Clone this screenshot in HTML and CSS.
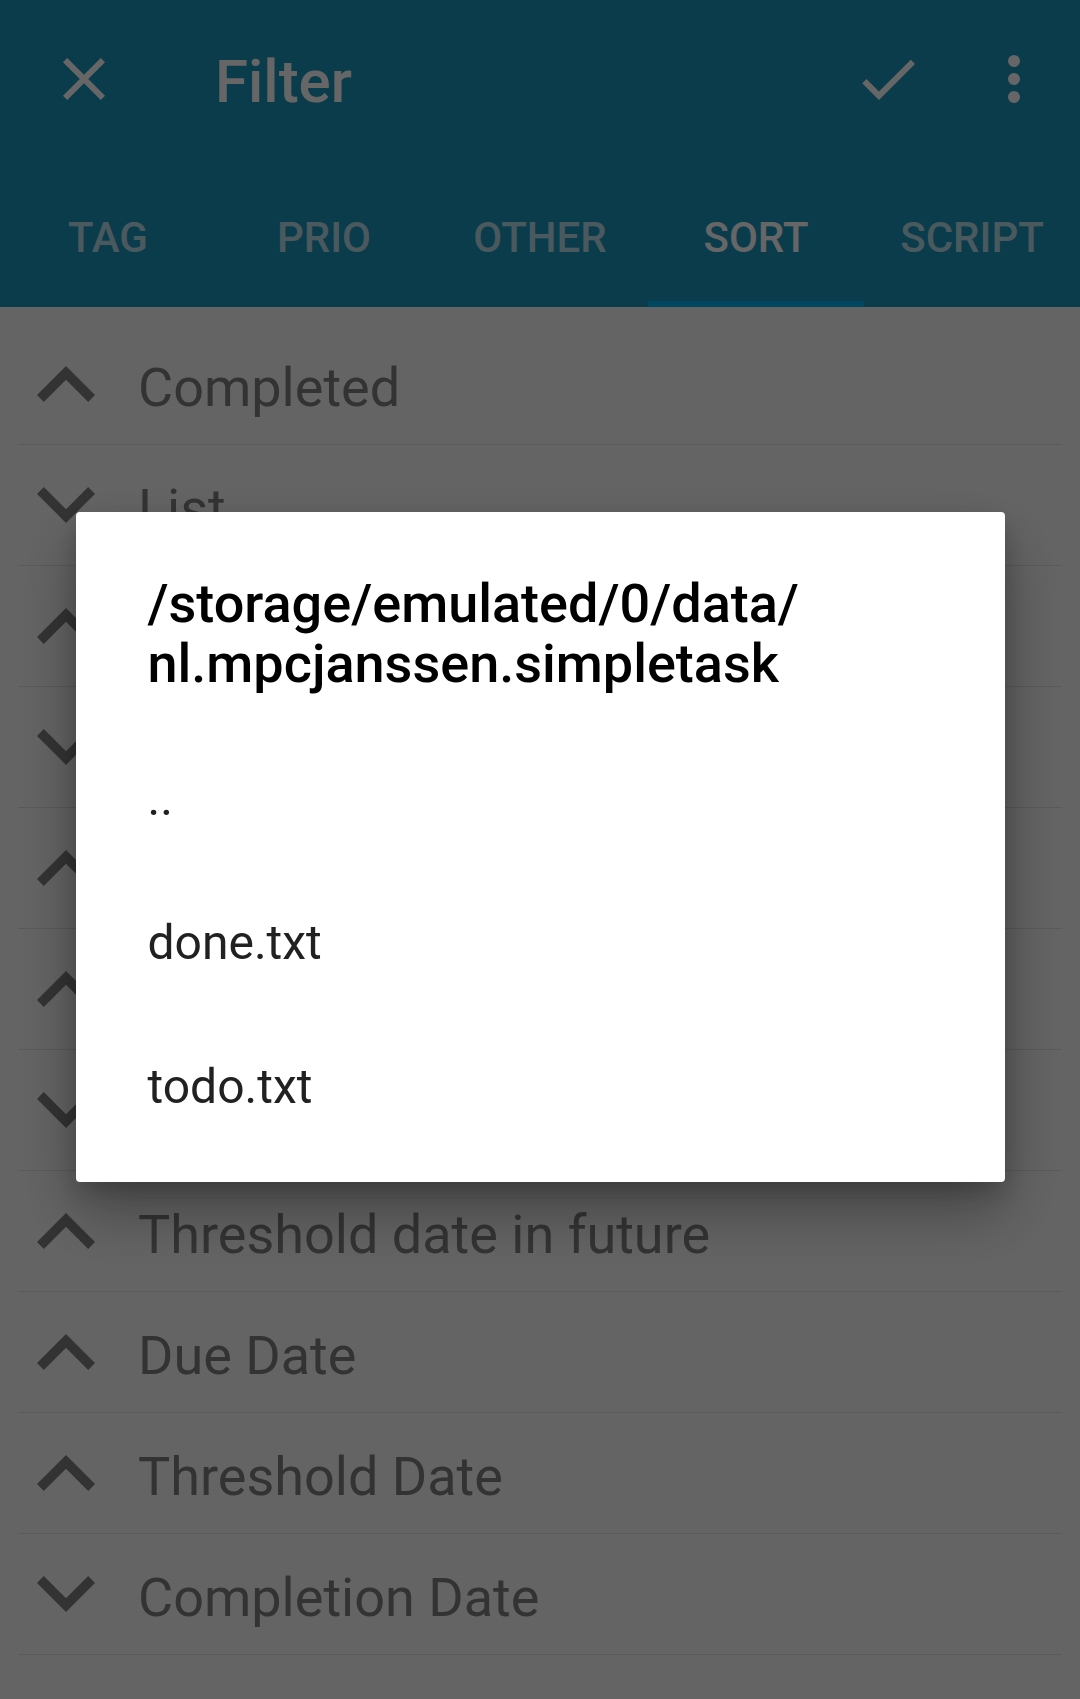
FILE: index.html
```html
<!DOCTYPE html>
<html lang="en">
<head>
<meta charset="utf-8">
<title>Filter</title>
<link rel="stylesheet" href="styles.css">
</head>
<body>
<div class="app">
  <header class="appbar">
    <div class="toolbar">
      <button class="nav-btn" aria-label="Close">
        <svg class="tb-icon" viewBox="0 0 24 24"><path d="M19 6.41L17.59 5 12 10.59 6.41 5 5 6.41 10.59 12 5 17.59 6.41 19 12 13.41 17.59 19 19 17.59 13.41 12z"/></svg>
      </button>
      <h1 class="title">Filter</h1>
      <div class="actions">
        <button class="action-btn" aria-label="Apply">
          <svg class="tb-icon" viewBox="0 0 24 24"><path d="M9 16.17L4.83 12l-1.42 1.41L9 19 21 7l-1.41-1.41z"/></svg>
        </button>
        <button class="overflow-btn" aria-label="More options">
          <svg class="tb-icon" viewBox="0 0 24 24"><circle cx="12" cy="6" r="2"/><circle cx="12" cy="12" r="2"/><circle cx="12" cy="18" r="2"/></svg>
        </button>
      </div>
    </div>
    <nav class="tabs">
      <div class="tab">TAG</div>
      <div class="tab">PRIO</div>
      <div class="tab">OTHER</div>
      <div class="tab active">SORT</div>
      <div class="tab">SCRIPT</div>
    </nav>
  </header>

  <ul class="sort-list">
    <li class="sort-row"><svg class="chev" viewBox="6 8 12 7.41"><path d="M12 8l-6 6 1.41 1.41L12 10.83l4.59 4.58L18 14z"/></svg><span class="label">Completed</span></li>
    <li class="sort-row"><svg class="chev" viewBox="6 8.59 12 7.41"><path d="M16.59 8.59L12 13.17 7.41 8.59 6 10l6 6 6-6z"/></svg><span class="label">List</span></li>
    <li class="sort-row"><svg class="chev" viewBox="6 8 12 7.41"><path d="M12 8l-6 6 1.41 1.41L12 10.83l4.59 4.58L18 14z"/></svg><span class="label">Tag</span></li>
    <li class="sort-row"><svg class="chev" viewBox="6 8.59 12 7.41"><path d="M16.59 8.59L12 13.17 7.41 8.59 6 10l6 6 6-6z"/></svg><span class="label">Priority</span></li>
    <li class="sort-row"><svg class="chev" viewBox="6 8 12 7.41"><path d="M12 8l-6 6 1.41 1.41L12 10.83l4.59 4.58L18 14z"/></svg><span class="label">Alphabetical</span></li>
    <li class="sort-row"><svg class="chev" viewBox="6 8 12 7.41"><path d="M12 8l-6 6 1.41 1.41L12 10.83l4.59 4.58L18 14z"/></svg><span class="label">File order</span></li>
    <li class="sort-row"><svg class="chev" viewBox="6 8.59 12 7.41"><path d="M16.59 8.59L12 13.17 7.41 8.59 6 10l6 6 6-6z"/></svg><span class="label">Creation Date</span></li>
    <li class="sort-row"><svg class="chev" viewBox="6 8 12 7.41"><path d="M12 8l-6 6 1.41 1.41L12 10.83l4.59 4.58L18 14z"/></svg><span class="label">Threshold date in future</span></li>
    <li class="sort-row"><svg class="chev" viewBox="6 8 12 7.41"><path d="M12 8l-6 6 1.41 1.41L12 10.83l4.59 4.58L18 14z"/></svg><span class="label">Due Date</span></li>
    <li class="sort-row"><svg class="chev" viewBox="6 8 12 7.41"><path d="M12 8l-6 6 1.41 1.41L12 10.83l4.59 4.58L18 14z"/></svg><span class="label">Threshold Date</span></li>
    <li class="sort-row"><svg class="chev" viewBox="6 8.59 12 7.41"><path d="M16.59 8.59L12 13.17 7.41 8.59 6 10l6 6 6-6z"/></svg><span class="label">Completion Date</span></li>
  </ul>
</div>

<div class="scrim">
  <div class="dialog" role="dialog">
    <h2 class="dialog-title">/storage/emulated/0/data/<wbr>nl.mpcjanssen.simpletask</h2>
    <ul class="file-list">
      <li class="file-item">..</li>
      <li class="file-item">done.txt</li>
      <li class="file-item">todo.txt</li>
    </ul>
  </div>
</div>
</body>
</html>
```

FILE: styles.css
```css
* {
  box-sizing: border-box;
}

html, body {
  margin: 0;
  padding: 0;
}

body {
  width: 1080px;
  height: 1699px;
  overflow: hidden;
  background: #fafafa;
  font-family: Roboto, "Liberation Sans", sans-serif;
}

.app {
  width: 1080px;
  height: 1699px;
  background: #fafafa;
}

/* ---------- App bar ---------- */
.appbar {
  background: #1c96be;
  color: #ffffff;
}

.toolbar {
  height: 163px;
  display: flex;
  align-items: center;
}

.nav-btn,
.action-btn,
.overflow-btn {
  border: 0;
  padding: 0;
  background: transparent;
  color: #ffffff;
  height: 72px;
  margin-bottom: 5px;
  display: flex;
  align-items: center;
  justify-content: center;
}

.nav-btn {
  width: 168px;
}

.action-btn {
  width: 144px;
}

.overflow-btn {
  width: 108px;
}

.tb-icon {
  width: 72px;
  height: 72px;
  fill: currentColor;
}

.title {
  margin: 0 0 0 47px;
  font-size: 60px;
  font-weight: 500;
  line-height: normal;
  flex: 1;
}

.actions {
  display: flex;
  margin-right: 12px;
}

.tabs {
  display: flex;
  height: 144px;
}

.tab {
  flex: 1;
  display: flex;
  align-items: center;
  justify-content: center;
  padding-top: 5px;
  font-size: 42px;
  font-weight: 500;
  color: rgba(255, 255, 255, 0.7);
}

.tab.active {
  color: #ffffff;
  box-shadow: inset 0 -6px 0 #00b4f5;
}

/* ---------- Sort list ---------- */
.sort-list {
  list-style: none;
  margin: 0;
  padding: 17px 18px 0;
}

.sort-row {
  height: 121px;
  border-bottom: 1px solid #e0e0e0;
  display: flex;
  align-items: center;
}

.chev {
  width: 58px;
  height: 36px;
  margin-left: 19px;
  fill: #808080;
  flex: none;
}

.label {
  margin-left: 43px;
  padding-top: 6px;
  font-size: 54px;
  color: #808080;
  white-space: nowrap;
}

/* ---------- Dialog ---------- */
.scrim {
  position: fixed;
  inset: 0;
  background: rgba(0, 0, 0, 0.6);
  display: flex;
  align-items: center;
  justify-content: center;
  padding-bottom: 5px;
}

.dialog {
  width: 929px;
  background: #ffffff;
  border-radius: 4px;
  padding: 62px 0 24px;
  box-shadow: 0 30px 60px rgba(0, 0, 0, 0.32), 0 10px 24px rgba(0, 0, 0, 0.18);
}

.dialog-title {
  margin: 0;
  padding: 0 72px;
  font-size: 54px;
  font-weight: 500;
  line-height: 60px;
  color: #000000;
}

.file-list {
  list-style: none;
  margin: 32px 0 0;
  padding: 0;
}

.file-item {
  height: 144px;
  padding: 0 72px;
  display: flex;
  align-items: center;
  font-size: 48px;
  color: #212121;
}
```
